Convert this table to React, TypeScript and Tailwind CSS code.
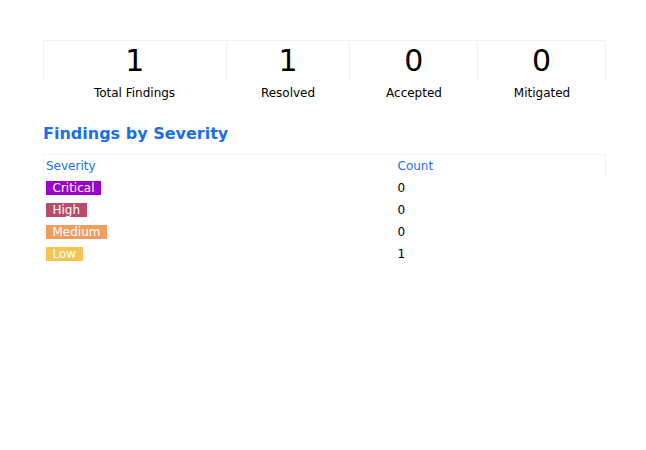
const stats = [
  { value: 1, label: "Total Findings", w: "w-[183px]" },
  { value: 1, label: "Resolved", w: "w-[124px]" },
  { value: 0, label: "Accepted", w: "w-[128px]" },
  { value: 0, label: "Mitigated", w: "w-[128px]" },
];

const severities = [
  { name: "Critical", count: 0, color: "bg-[#9a00c9]" },
  { name: "High", count: 0, color: "bg-[#b84c6a]" },
  { name: "Medium", count: 0, color: "bg-[#ef9e5f]" },
  { name: "Low", count: 1, color: "bg-[#f6c453]" },
];

export default function App() {
  return (
    <div className="min-h-[450px] bg-white pl-[43px] pt-10 text-black font-['DejaVu_Sans',sans-serif]">
      <div className="w-[563px]">
        <div className="flex border-r border-[#f3f3f3]">
          {stats.map((s) => (
            <div
              key={s.label}
              className={`${s.w} h-[41px] border-t border-l border-[#f3f3f3] flex items-center justify-center text-[30px] leading-none`}
            >
              {s.value}
            </div>
          ))}
        </div>
        <div className="flex mt-[5px]">
          {stats.map((s) => (
            <div key={s.label} className={`${s.w} text-center text-[12px] leading-[14px]`}>
              {s.label}
            </div>
          ))}
        </div>

        <h2 className="mt-[24px] text-[16px] font-bold leading-5 text-[#1a6fe8]">Findings by Severity</h2>

        <table className="mt-[10px] w-full border-collapse text-[12px]">
          <thead>
            <tr className="h-[22px] border-t border-[#f3f3f3]">
              <th className="w-[352px] border-l border-[#f3f3f3] px-[2px] text-left font-normal text-[#1a6fe8]">Severity</th>
              <th className="border-r border-[#f3f3f3] px-[2px] text-left font-normal text-[#1a6fe8]">Count</th>
            </tr>
          </thead>
          <tbody>
            {severities.map((s) => (
              <tr key={s.name} className="h-[22px]">
                <td className="px-[2px]">
                  <span className={`${s.color} inline-block px-[7px] text-white leading-[14px]`}>{s.name}</span>
                </td>
                <td className="px-[2px]">{s.count}</td>
              </tr>
            ))}
          </tbody>
        </table>
      </div>
    </div>
  );
}
